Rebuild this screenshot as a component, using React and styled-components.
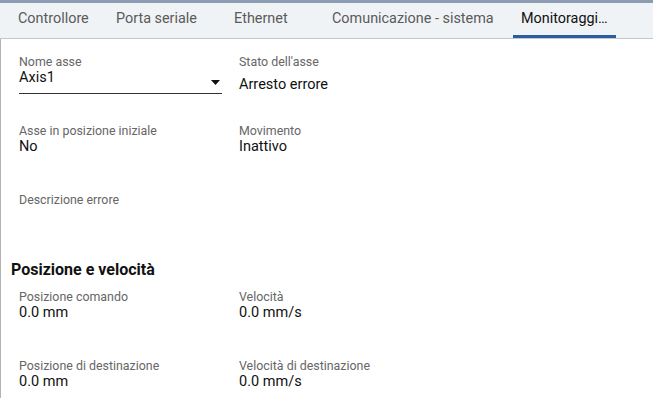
import React from "react";
import styled, { createGlobalStyle } from "styled-components";

const Global = createGlobalStyle`
  html, body { margin: 0; padding: 0; background: #fff; }
  body { font-family: Roboto, "Noto Sans", Arial, sans-serif; }
`;

const Page = styled.div`
  width: 653px;
  height: 398px;
  overflow: hidden;
  display: flex;
  flex-direction: column;
  border-top: 3px solid #8c9db2;
  box-sizing: border-box;
`;

const TabBar = styled.div`
  height: 35px;
  background: #f0f3f6;
  border-bottom: 1px solid #c4c6c8;
  display: flex;
  padding-left: 10px;
  flex-shrink: 0;
`;

const Tab = styled.div`
  width: ${(p) => p.$w}px;
  box-sizing: border-box;
  padding: 8px 8px 0;
  font-size: 14.4px;
  line-height: 16px;
  color: ${(p) => (p.$active ? "#111" : "#5a5a5a")};
  white-space: nowrap;
  overflow: hidden;
  text-overflow: ellipsis;
  border-bottom: 3px solid ${(p) => (p.$active ? "#2a5c9e" : "transparent")};
`;

const Body = styled.div`
  flex: 1;
  border-left: 1px solid #b4b4b4;
  padding-top: 16px;
`;

const Grid = styled.div`
  display: grid;
  grid-template-columns: 220px 220px;
  grid-template-rows: ${(p) => p.$rows};
  padding-left: 18px;
`;

const Field = styled.div`
  display: flex;
  flex-direction: column;
`;

const Label = styled.div`
  font-size: 12.4px;
  line-height: 14px;
  color: #666;
  white-space: nowrap;
`;

const Value = styled.div`
  font-size: 14.5px;
  line-height: 18px;
  color: #111;
  white-space: nowrap;
  margin-top: ${(p) => p.$offset || 0}px;
`;

const Select = styled.div`
  width: 203px;
  display: flex;
  justify-content: space-between;
  border-bottom: 1px solid #333;
  padding-bottom: 6px;
  font-size: 14.5px;
  line-height: 18px;
  color: #111;
`;

const Arrow = styled.svg`
  margin-top: 11px;
  margin-right: 2px;
`;

const Heading = styled.h2`
  margin: 0;
  padding-left: 10px;
  height: 30px;
  font-size: 16px;
  font-weight: 700;
  line-height: 20px;
  color: #111;
`;

const F = ({ label, value, offset }) => (
  <Field>
    <Label>{label}</Label>
    {value && <Value $offset={offset}>{value}</Value>}
  </Field>
);

export default function App() {
  return (
    <>
      <Global />
      <Page>
        <TabBar>
          <Tab $w={98}>Controllore</Tab>
          <Tab $w={118}>Porta seriale</Tab>
          <Tab $w={98}>Ethernet</Tab>
          <Tab $w={189}>Comunicazione - sistema</Tab>
          <Tab $w={103} $active>Monitoraggio asse</Tab>
        </TabBar>
        <Body>
          <Grid $rows="69px 69px 67px">
            <Field>
              <Label>Nome asse</Label>
              <Select>
                <span>Axis1</span>
                <Arrow width="9" height="5" viewBox="0 0 9 5">
                  <path d="M0 0 L9 0 L4.5 5 Z" fill="#111" />
                </Arrow>
              </Select>
            </Field>
            <F label="Stato dell'asse" value="Arresto errore" offset={7} />
            <F label="Asse in posizione iniziale" value="No" />
            <F label="Movimento" value="Inattivo" />
            <F label="Descrizione errore" />
            <div />
          </Grid>
          <Heading>Posizione e velocità</Heading>
          <Grid $rows="69px 69px">
            <F label="Posizione comando" value="0.0 mm" />
            <F label="Velocità" value="0.0 mm/s" />
            <F label="Posizione di destinazione" value="0.0 mm" />
            <F label="Velocità di destinazione" value="0.0 mm/s" />
          </Grid>
        </Body>
      </Page>
    </>
  );
}
